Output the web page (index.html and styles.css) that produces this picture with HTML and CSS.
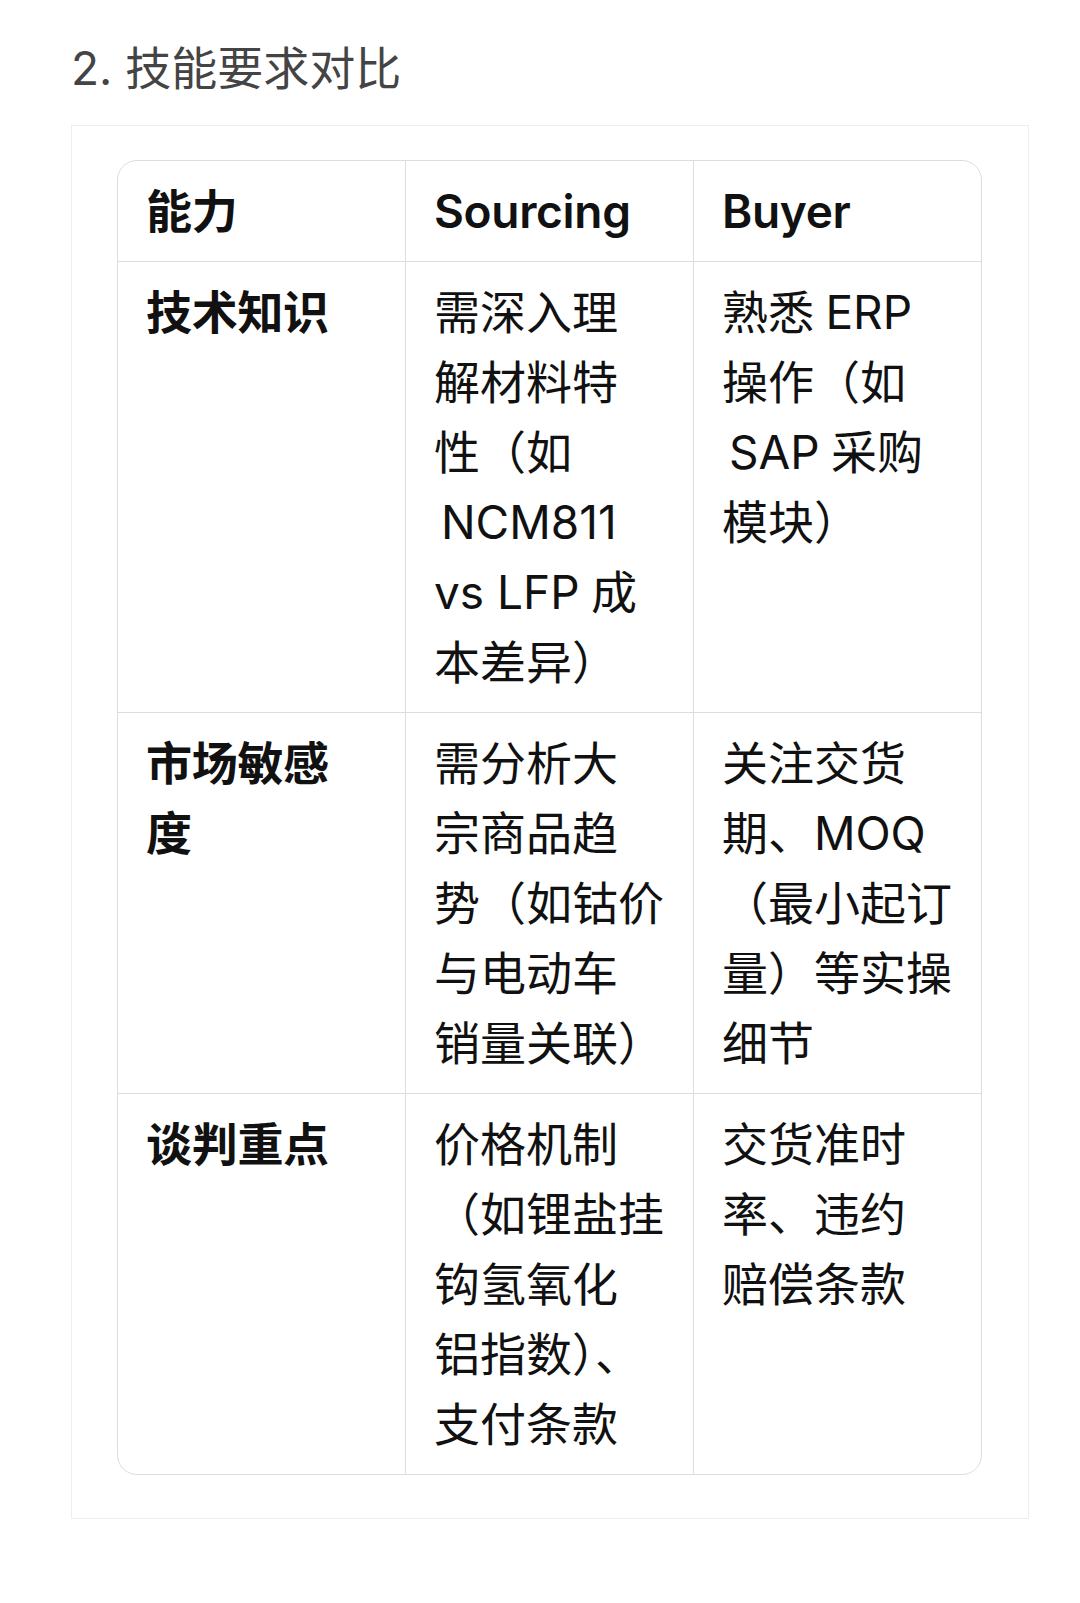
FILE: index.html
```html
<!DOCTYPE html>
<html lang="zh-CN">
<head>
<meta charset="utf-8">
<title>技能要求对比</title>
<link rel="stylesheet" href="styles.css">
</head>
<body>
<main class="page">
  <h2 class="section-title">2. 技能要求对比</h2>
  <div class="table-frame">
    <table class="compare">
      <thead>
        <tr>
          <th>能力</th>
          <th>Sourcing</th>
          <th>Buyer</th>
        </tr>
      </thead>
      <tbody>
        <tr>
          <td class="label">技术知识</td>
          <td>需深入理<br>解材料特<br>性（如<br><span class="gap">NCM811</span><br>vs LFP&#8197;成<br>本差异）</td>
          <td>熟悉&#8197;ERP<br>操作（如<br><span class="gap">SAP&#8197;采购</span><br>模块）</td>
        </tr>
        <tr>
          <td class="label">市场敏感<br>度</td>
          <td>需分析大<br>宗商品趋<br>势（如钴价<br>与电动车<br>销量关联）</td>
          <td>关注交货<br>期、MOQ<br>（最小起订<br>量）等实操<br>细节</td>
        </tr>
        <tr>
          <td class="label">谈判重点</td>
          <td>价格机制<br>（如锂盐挂<br>钩氢氧化<br>铝指数）、<br>支付条款</td>
          <td>交货准时<br>率、违约<br>赔偿条款</td>
        </tr>
      </tbody>
    </table>
  </div>
</main>
</body>
</html>
```

FILE: styles.css
```css
html, body {
  margin: 0;
  padding: 0;
  background: #ffffff;
}

body {
  font-family: "Inter", "Noto Sans CJK SC", "Noto Sans", sans-serif;
  color: #111111;
}

.page {
  width: 958px;
  padding: 33px 0 0 71px;
}

.section-title {
  margin: 0 0 22px 0;
  font-size: 46px;
  line-height: 70px;
  font-weight: 400;
  color: #444444;
}

.table-frame {
  border: 1px solid #eeeeee;
  padding: 34px 46px 43px 45px;
}

.compare {
  width: 865px;
  table-layout: fixed;
  border-collapse: separate;
  border-spacing: 0;
  border: 1px solid #dddddd;
  border-radius: 20px;
  overflow: hidden;
  font-size: 46px;
  line-height: 70px;
}

.compare th,
.compare td {
  width: 33.333%;
  padding: 15px 28px;
  text-align: left;
  vertical-align: top;
  white-space: nowrap;
  border-right: 1px solid #dddddd;
  border-bottom: 1px solid #dddddd;
}

.compare th:last-child,
.compare td:last-child {
  border-right: none;
}

.compare tbody tr:last-child td {
  border-bottom: none;
}

.compare th,
.compare td.label {
  font-weight: 600;
  letter-spacing: -0.3px;
}

.compare td {
  font-weight: 400;
}

.gap {
  margin-left: 7px;
}
```
